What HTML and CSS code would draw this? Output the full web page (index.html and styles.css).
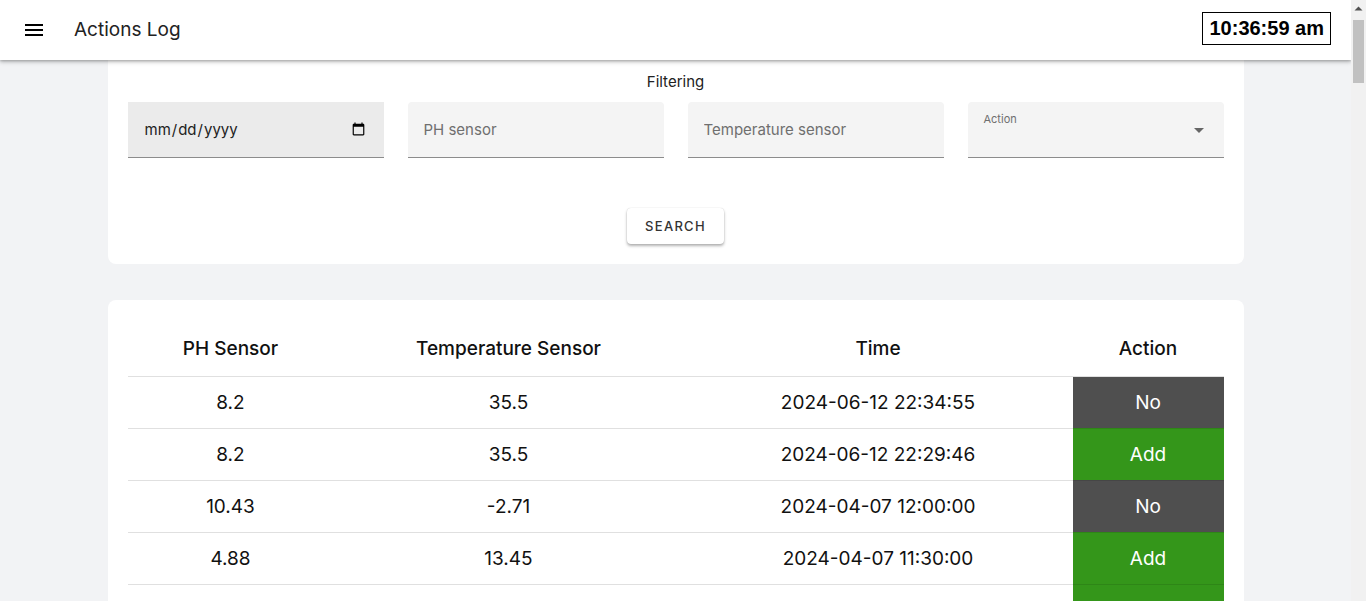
FILE: index.html
```html
<!DOCTYPE html>
<html>
<head>
<meta charset="utf-8">
<title>Actions Log</title>
<link rel="stylesheet" href="styles.css">
</head>
<body>
<div class="page">
  <header class="topbar">
    <div class="topbar-left">
      <button class="menu-btn" aria-label="menu">
        <svg width="24" height="24" viewBox="0 0 24 24"><path d="M3 18h18v-2H3v2zm0-5h18v-2H3v2zm0-7v2h18V6H3z" fill="#000"/></svg>
      </button>
      <h1 class="title">Actions Log</h1>
    </div>
    <div class="clock">10:36:59 am</div>
  </header>
  <main class="main">
    <section class="card filter-card">
      <div class="filter-title">Filtering</div>
      <div class="filter-row">
        <div class="field field-date"><input type="date" class="date-input"></div>
        <div class="field"><input type="text" placeholder="PH sensor"></div>
        <div class="field"><input type="text" placeholder="Temperature sensor"></div>
        <div class="field field-select">
          <span class="select-label">Action</span>
          <svg class="select-arrow" width="10" height="5" viewBox="0 0 10 5"><path d="M0 0l5 5 5-5z" fill="#666"/></svg>
        </div>
      </div>
      <div class="btn-row"><button class="search-btn">Search</button></div>
    </section>
    <section class="card table-card">
      <table class="log-table">
        <colgroup>
          <col class="c1"><col class="c2"><col class="c3"><col class="c4">
        </colgroup>
        <thead>
          <tr><th>PH Sensor</th><th>Temperature Sensor</th><th>Time</th><th>Action</th></tr>
        </thead>
        <tbody>
          <tr><td>8.2</td><td>35.5</td><td>2024-06-12 22:34:55</td><td class="act no">No</td></tr>
          <tr><td>8.2</td><td>35.5</td><td>2024-06-12 22:29:46</td><td class="act add">Add</td></tr>
          <tr><td>10.43</td><td>-2.71</td><td>2024-04-07 12:00:00</td><td class="act no">No</td></tr>
          <tr><td>4.88</td><td>13.45</td><td>2024-04-07 11:30:00</td><td class="act add">Add</td></tr>
          <tr class="last"><td></td><td></td><td></td><td class="act add"></td></tr>
        </tbody>
      </table>
    </section>
  </main>
</div>
<div class="scrollbar" aria-hidden="true">
  <svg class="sb-arrow" width="15" height="15" viewBox="0 0 15 15"><path d="M3.5 9.5h8L7.5 5.5z" fill="#505050"/></svg>
  <div class="sb-thumb"></div>
</div>
</body>
</html>
```
FILE: styles.css
```css
* { box-sizing: border-box; }
html, body { margin: 0; padding: 0; }
body {
  background: #f2f3f5;
  font-family: "Inter", "Roboto", sans-serif;
  color: #111;
}
.page {
  margin-right: 15px;
}
.scrollbar {
  position: fixed;
  top: 0;
  right: 0;
  width: 15px;
  height: 100%;
  background: #f1f1f1;
  z-index: 20;
}
.sb-arrow { display: block; margin-top: 1px; }
.sb-thumb {
  margin: 4px 2px 0;
  height: 63px;
  background: #c1c1c1;
}
.topbar {
  position: sticky;
  top: 0;
  z-index: 10;
  height: 60px;
  background: #fff;
  display: flex;
  align-items: center;
  justify-content: space-between;
  padding: 0 20px 0 22px;
  box-shadow: 0 2px 4px rgba(0,0,0,0.25), 0 1px 2px rgba(0,0,0,0.15);
}
.topbar-left { display: flex; align-items: center; }
.menu-btn {
  border: 0; background: none; padding: 0; width: 24px; height: 24px;
  display: flex; align-items: center; justify-content: center;
}
.title {
  margin: -2px 0 0 28px;
  font-size: 19px;
  font-weight: 400;
  color: #222;
}
.clock {
  font-family: "Liberation Sans", Arial, sans-serif;
  font-weight: 700;
  font-size: 20px;
  border: 1px solid #000;
  padding: 4px 6px;
  line-height: 23px;
  color: #000;
  margin-top: -4px;
}
.main {
  width: 1136px;
  margin: 0 auto;
  display: flex;
  flex-direction: column;
  gap: 36px;
}
.card {
  background: #fff;
  border-radius: 8px;
  padding: 20px;
}
.filter-card {
  border-radius: 0 0 8px 8px;
  padding-top: 12px;
}
.filter-title {
  text-align: center;
  font-size: 15px;
  line-height: 20px;
  color: #222;
  margin-bottom: 10px;
}
.filter-row {
  display: flex;
  gap: 24px;
}
.field {
  flex: 1;
  height: 56px;
  background: #f4f4f4;
  border-radius: 4px 4px 0 0;
  border-bottom: 1px solid #8c8c8c;
  position: relative;
  display: flex;
  align-items: center;
}
.field input {
  border: 0;
  background: transparent;
  outline: none;
  width: 100%;
  height: 100%;
  padding: 0 16px;
  font-family: "Inter", "Roboto", sans-serif;
  font-size: 15px;
  color: #222;
}
.field input::placeholder { color: #6f6f6f; }
.field-date { background: #ebebeb; border-radius: 0; }
.date-input { color: #222; }
.select-label {
  position: absolute;
  left: 16px;
  top: 10px;
  font-size: 11px;
  color: #6f6f6f;
}
.select-arrow {
  position: absolute;
  right: 20px;
  top: 26px;
}
.btn-row {
  display: flex;
  justify-content: center;
  margin-top: 50px;
}
.search-btn {
  width: 97px;
  height: 36px;
  background: #fff;
  border: 0;
  border-radius: 4px;
  box-shadow: 0 2px 3px rgba(0,0,0,0.3), 0 0 1px rgba(0,0,0,0.2);
  font-family: "Inter", "Roboto", sans-serif;
  font-size: 13px;
  font-weight: 500;
  letter-spacing: 1.3px;
  text-transform: uppercase;
  color: #333;
}
.table-card { padding: 20px 20px 0; }
.log-table {
  width: 100%;
  border-collapse: collapse;
  table-layout: fixed;
  font-size: 19px;
}
.c1 { width: 206px; }
.c2 { width: 350px; }
.c3 { width: 389px; }
.c4 { width: 151px; }
.log-table th {
  height: 56px;
  font-weight: 500;
  text-align: center;
  border-bottom: 1px solid #e0e0e0;
  padding-top: 2px;
}
.log-table td {
  height: 52px;
  text-align: center;
  border-bottom: 1px solid #e0e0e0;
}
.log-table td.act { color: #fff; border-bottom-color: rgba(0,0,0,0.1); }
.log-table td.no { background: #4f4f4f; }
.log-table td.add { background: #34961a; }
```
